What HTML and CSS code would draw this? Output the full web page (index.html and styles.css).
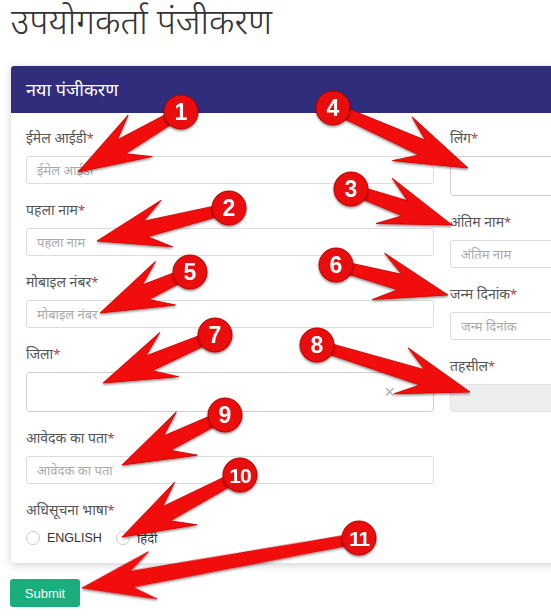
FILE: index.html
```html
<!DOCTYPE html>
<html lang="hi">
<head>
<meta charset="utf-8">
<title>उपयोगकर्ता पंजीकरण</title>
<link rel="stylesheet" href="styles.css">
</head>
<body>
<div class="page">
  <h1 class="title">उपयोगकर्ता पंजीकरण</h1>
  <div class="card">
    <div class="card-head">नया पंजीकरण</div>
    <div class="card-body">
      <div class="col">
        <div class="field">
          <label>ईमेल आईडी<span class="req">*</span></label>
          <input class="input" placeholder="ईमेल आईडी">
        </div>
        <div class="field">
          <label>पहला नाम<span class="req">*</span></label>
          <input class="input" placeholder="पहला नाम">
        </div>
        <div class="field">
          <label>मोबाइल नंबर<span class="req">*</span></label>
          <input class="input" placeholder="मोबाइल नंबर">
        </div>
        <div class="field">
          <label>जिला<span class="req">*</span></label>
          <div class="select"><span class="clear">×</span></div>
        </div>
        <div class="field">
          <label>आवेदक का पता<span class="req">*</span></label>
          <input class="input" placeholder="आवेदक का पता">
        </div>
        <div class="field last">
          <label>अधिसूचना भाषा<span class="req">*</span></label>
          <div class="radios">
            <span class="radio"></span><span class="radio-text en">ENGLISH</span>
            <span class="radio"></span><span class="radio-text">हिंदी</span>
          </div>
        </div>
      </div>
      <div class="col">
        <div class="field">
          <label>लिंग<span class="req">*</span></label>
          <div class="select"></div>
        </div>
        <div class="field">
          <label>अंतिम नाम<span class="req">*</span></label>
          <input class="input" placeholder="अंतिम नाम">
        </div>
        <div class="field">
          <label>जन्म दिनांक<span class="req">*</span></label>
          <input class="input" placeholder="जन्म दिनांक">
        </div>
        <div class="field last">
          <label>तहसील<span class="req">*</span></label>
          <div class="input disabled"></div>
        </div>
      </div>
    </div>
  </div>
  <button class="submit">Submit</button>
</div>

<svg class="overlay" width="551" height="616" viewBox="0 0 551 616" xmlns="http://www.w3.org/2000/svg">
  <defs>
    <filter id="sh" x="-30%" y="-30%" width="160%" height="160%">
      <feDropShadow dx="0" dy="1.5" stdDeviation="1.2" flood-color="#000" flood-opacity="0.45"/>
    </filter>
  </defs>
  <g class="arrows" filter="url(#sh)">
    <g transform="translate(78,172) rotate(149.8)"><polygon points="-119,-5 -50,-8 -72,-24 0,0 -72,24 -50,8 -119,5"/></g>
    <g transform="translate(97,241) rotate(166)"><polygon points="-136,-5 -50,-8 -72,-24 0,0 -72,24 -50,8 -136,5"/></g>
    <g transform="translate(452,225) rotate(19.6)"><polygon points="-107,-5 -50,-8 -72,-24 0,0 -72,24 -50,8 -107,5"/></g>
    <g transform="translate(468,168) rotate(24)"><polygon points="-148,-5 -50,-8 -72,-24 0,0 -72,24 -50,8 -148,5"/></g>
    <g transform="translate(100,313) rotate(155.5)"><polygon points="-99,-5 -50,-8 -72,-24 0,0 -72,24 -50,8 -99,5"/></g>
    <g transform="translate(448,295) rotate(15)"><polygon points="-116,-5 -50,-8 -72,-24 0,0 -72,24 -50,8 -116,5"/></g>
    <g transform="translate(103,383) rotate(156.8)"><polygon points="-122,-5 -50,-8 -72,-24 0,0 -72,24 -50,8 -122,5"/></g>
    <g transform="translate(470,392) rotate(17.1)"><polygon points="-160,-5 -50,-8 -72,-24 0,0 -72,24 -50,8 -160,5"/></g>
    <g transform="translate(122,465) rotate(154.1)"><polygon points="-114,-5 -50,-8 -72,-24 0,0 -72,24 -50,8 -114,5"/></g>
    <g transform="translate(122,537) rotate(152.3)"><polygon points="-133,-5 -50,-8 -72,-24 0,0 -72,24 -50,8 -133,5"/></g>
    <g transform="translate(82,588) rotate(169.8)"><polygon points="-281,-5 -50,-8 -72,-24 0,0 -72,24 -50,8 -281,5"/></g>
  </g>
  <g class="badges" filter="url(#sh)">
    <circle cx="181" cy="112" r="17"/>
    <circle cx="229" cy="208" r="17"/>
    <circle cx="351" cy="189" r="17"/>
    <circle cx="333" cy="108" r="17"/>
    <circle cx="190" cy="272" r="17"/>
    <circle cx="336" cy="265" r="17"/>
    <circle cx="215" cy="335" r="17"/>
    <circle cx="317" cy="345" r="17"/>
    <circle cx="225" cy="415" r="17"/>
    <circle cx="240" cy="475" r="17"/>
    <circle cx="359" cy="538" r="17"/>
  </g>
  <g class="nums">
    <text x="181" y="120">1</text>
    <text x="229" y="216">2</text>
    <text x="351" y="197">3</text>
    <text x="333" y="116">4</text>
    <text x="190" y="280">5</text>
    <text x="336" y="273">6</text>
    <text x="215" y="343">7</text>
    <text x="317" y="353">8</text>
    <text x="225" y="423">9</text>
    <text class="two" x="240" y="483">10</text>
    <text class="two" x="359" y="546">11</text>
  </g>
</svg>
</body>
</html>
```
FILE: styles.css
```css
html, body {
  margin: 0;
  padding: 0;
}
body {
  width: 551px;
  height: 616px;
  overflow: hidden;
  position: relative;
  background: #fff;
  font-family: "Noto Sans", "Noto Sans Devanagari", "Lato", sans-serif;
  color: #333;
}
.page {
  width: 900px;
  padding-left: 10px;
}
.title {
  margin: 0 0 0 1px;
  height: 66px;
  font-size: 35px;
  font-weight: 300;
  line-height: 42px;
  color: #333;
}
.card {
  margin-left: 1px;
  width: 862px;
  background: #fff;
  border-radius: 3px;
  box-shadow: 0 2px 8px rgba(0, 0, 0, 0.18);
}
.card-head {
  height: 47px;
  line-height: 47px;
  padding: 0 15px;
  background: #302d7c;
  color: #fff;
  font-size: 18px;
  border-radius: 3px 3px 0 0;
}
.card-body {
  display: flex;
  gap: 16px;
  padding: 15px;
}
.col {
  width: 408px;
}
.field {
  margin-bottom: 16px;
}
.field.last {
  margin-bottom: 0;
}
label {
  display: block;
  font-size: 14px;
  line-height: 20px;
  height: 20px;
  margin-bottom: 8px;
  color: #555;
}
.req {
  color: #a94442;
  font-size: 13px;
}
.input {
  display: block;
  box-sizing: border-box;
  width: 100%;
  height: 28px;
  margin: 0;
  padding: 0 10px;
  border: 1px solid #ddd;
  border-radius: 3px;
  font-family: inherit;
  font-size: 13px;
  color: #555;
  background: #fff;
  outline: none;
}
.input::placeholder {
  color: #aaa;
}
.input.disabled {
  background: #eee;
  border-color: #e3e3e3;
}
.select {
  box-sizing: border-box;
  height: 40px;
  border: 1px solid #ccc;
  border-radius: 4px;
  position: relative;
  display: flex;
  align-items: center;
  justify-content: flex-end;
  padding-right: 38px;
}
.clear {
  color: #aaa;
  font-family: "Liberation Sans", sans-serif;
  font-size: 18px;
  line-height: 1;
}
.radios {
  display: flex;
  align-items: center;
  height: 20px;
  margin-top: 7px;
}
.radio {
  width: 14px;
  height: 14px;
  box-sizing: border-box;
  border: 1px solid #ccc;
  border-radius: 50%;
  margin-right: 7px;
}
.radio-text {
  font-size: 13px;
  color: #333;
  margin-right: 14px;
}
.radio-text.en {
  font-family: "Liberation Sans", sans-serif;
  font-size: 12.5px;
}
.submit {
  display: block;
  margin-top: 16px;
  width: 70px;
  height: 28px;
  padding: 0;
  border: 0;
  border-radius: 3px;
  background: #1aae7c;
  color: #fff;
  font-family: "Liberation Sans", sans-serif;
  font-size: 13px;
}
.overlay {
  position: absolute;
  left: 0;
  top: 0;
  pointer-events: none;
}
.arrows polygon {
  fill: #f20c0c;
  stroke: #d40000;
  stroke-width: 0.8;
  stroke-linejoin: round;
}
.badges circle {
  fill: #ea0a0a;
  stroke: #b80000;
  stroke-width: 1;
}
.nums text {
  fill: #fff;
  font-family: "Liberation Sans", sans-serif;
  font-weight: 700;
  font-size: 23px;
  text-anchor: middle;
}
.nums text.two {
  font-size: 21px;
  letter-spacing: -1px;
}
```
